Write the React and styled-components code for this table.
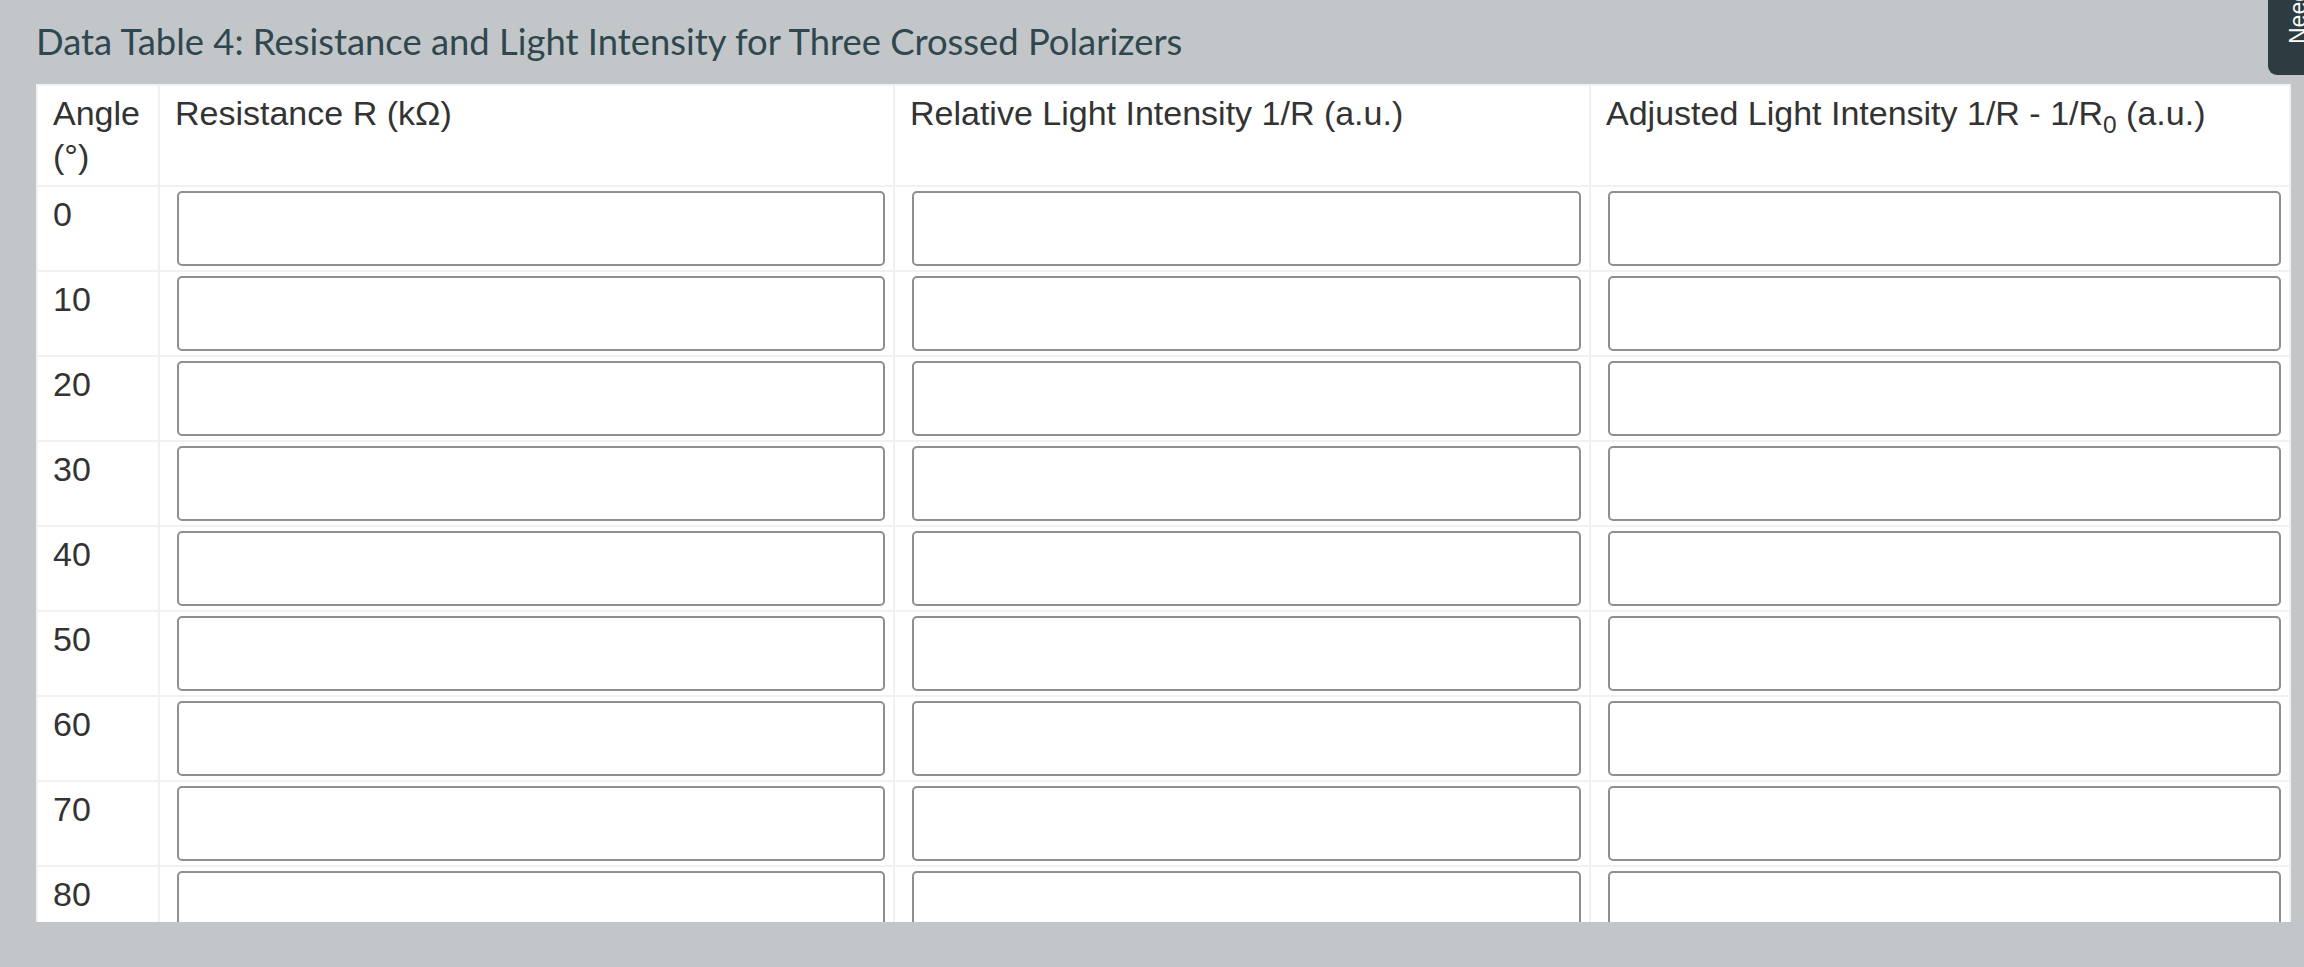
import React from "react";
import styled, { createGlobalStyle } from "styled-components";

const Global = createGlobalStyle`
  html, body { margin: 0; padding: 0; }
  body {
    background: #c2c6c9;
    font-family: "Liberation Sans", Arial, sans-serif;
    overflow: hidden;
  }
`;

const Page = styled.div`
  position: relative;
  height: 967px;
  padding: 0 13px 0 36px;
  box-sizing: border-box;
  overflow: hidden;
`;

const Title = styled.h2`
  margin: 0;
  height: 84px;
  display: flex;
  align-items: center;
  font-family: Lato, "Open Sans", sans-serif;
  font-weight: 400;
  font-size: 36.4px;
  color: #2f474e;
  padding-bottom: 2px;
  box-sizing: border-box;
`;

const Scroller = styled.div`
  height: 838px;
  overflow: hidden;
  background: #fff;
`;

const Table = styled.table`
  width: 100%;
  border-collapse: collapse;
  table-layout: fixed;
  background: #fff;
  color: #333;
  font-size: 34px;
  line-height: 43px;
`;

const HeadCell = styled.th`
  text-align: left;
  font-weight: 400;
  vertical-align: top;
  padding: 6px 8px 0 15px;
  height: 101px;
  box-sizing: border-box;
  border: 2px solid #f1f1f1;
`;

const Sub = styled.sub`
  font-size: 0.72em;
  line-height: 0;
`;

const Cell = styled.td`
  vertical-align: top;
  padding: ${(p) => (p.$label ? "6px 8px 2px 15px" : "4px 8px 4px 17px")};
  border: 2px solid #f1f1f1;
`;

const Field = styled.input`
  display: block;
  width: 100%;
  height: 75px;
  box-sizing: border-box;
  border: 2px solid #8f8f8f;
  border-radius: 5px;
  background: #fff;
  margin: 0;
  padding: 0 12px;
  font-size: 28px;
  font-family: inherit;
`;

const SideTab = styled.div`
  position: absolute;
  top: 0;
  right: 0;
  width: 36px;
  height: 75px;
  background: #2c3c40;
  border-bottom-left-radius: 9px;
  overflow: hidden;
`;

const SideText = styled.span`
  position: absolute;
  left: 19px;
  top: 44px;
  transform-origin: left top;
  transform: rotate(-90deg);
  white-space: nowrap;
  color: #fff;
  font-family: "Liberation Sans", Arial, sans-serif;
  font-size: 23px;
  line-height: 1;
  font-weight: 400;
`;

const angles = [0, 10, 20, 30, 40, 50, 60, 70, 80];

export default function App() {
  return (
    <>
      <Global />
      <Page>
        <Title>Data Table 4: Resistance and Light Intensity for Three Crossed Polarizers</Title>
        <Scroller>
          <Table>
            <colgroup>
              <col style={{ width: "122px" }} />
              <col style={{ width: "735px" }} />
              <col style={{ width: "696px" }} />
              <col />
            </colgroup>
            <thead>
              <tr>
                <HeadCell>Angle (°)</HeadCell>
                <HeadCell>Resistance R (kΩ)</HeadCell>
                <HeadCell>Relative Light Intensity 1/R (a.u.)</HeadCell>
                <HeadCell>
                  Adjusted Light Intensity 1/R - 1/R<Sub>0</Sub> (a.u.)
                </HeadCell>
              </tr>
            </thead>
            <tbody>
              {angles.map((a) => (
                <tr key={a}>
                  <Cell $label>{a}</Cell>
                  <Cell><Field type="text" /></Cell>
                  <Cell><Field type="text" /></Cell>
                  <Cell><Field type="text" /></Cell>
                </tr>
              ))}
            </tbody>
          </Table>
        </Scroller>
        <SideTab>
          <SideText>Need Help</SideText>
        </SideTab>
      </Page>
    </>
  );
}
